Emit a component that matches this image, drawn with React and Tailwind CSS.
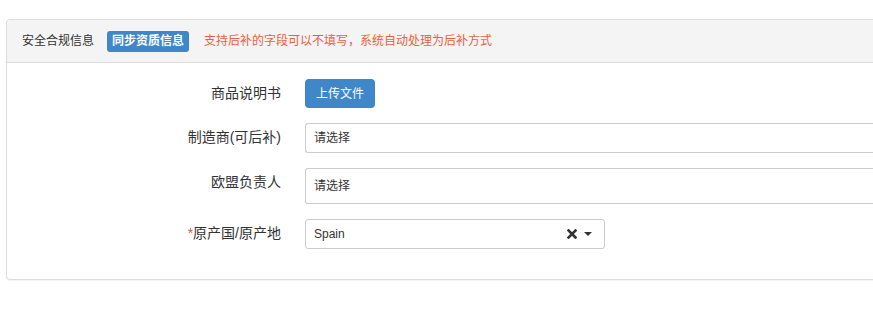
const FONT = '"Liberation Sans", Arial, "Noto Sans CJK SC", sans-serif'

function Label({ children, required }) {
  return (
    <div className="w-[274px] shrink-0 pt-[4px] text-right text-[14px] leading-[20px] text-[#333]">
      {required && <span className="text-[#c8603f]">*</span>}
      {children}
    </div>
  )
}

function TextSelect({ text, tall }) {
  return (
    <div
      className={`flex-1 flex items-center rounded-l-[3px] border border-r-0 border-[#ccc] bg-white pl-[8px] text-[12px] text-[#333] ${
        tall ? 'h-[36px]' : 'h-[30px]'
      }`}
    >
      {text}
    </div>
  )
}

export default function App() {
  return (
    <div className="w-[873px] h-[326px] overflow-hidden bg-white" style={{ fontFamily: FONT }}>
      <div className="ml-[6px] mt-[19px] w-[900px] rounded-[4px] border border-[#ddd] bg-white shadow-[0_1px_1px_rgba(0,0,0,0.05)]">
        <div className="flex h-[43px] items-center border-b border-[#ddd] bg-[#f4f4f4] pl-[15px] text-[12px] rounded-t-[4px]">
          <span className="text-[#333]">安全合规信息</span>
          <span className="ml-[13px] rounded-[3px] bg-[#3f87c9] px-[5px] py-[3px] font-bold leading-[15px] text-white">
            同步资质信息
          </span>
          <span className="ml-[15px] text-[#e8603f]">支持后补的字段可以不填写，系统自动处理为后补方式</span>
        </div>

        <div className="flex flex-col gap-[15px] pt-[16px] pb-[30px]">
          <div className="flex items-start gap-[24px]">
            <Label>商品说明书</Label>
            <button className="h-[29px] w-[70px] rounded-[4px] bg-[#3f87c9] text-[12px] text-white">
              上传文件
            </button>
          </div>

          <div className="flex items-start gap-[24px]">
            <Label>制造商(可后补)</Label>
            <TextSelect text="请选择" />
          </div>

          <div className="flex items-start gap-[24px]">
            <Label>欧盟负责人</Label>
            <TextSelect text="请选择" tall />
          </div>

          <div className="flex items-start gap-[24px]">
            <Label required>原产国/原产地</Label>
            <div className="flex h-[30px] w-[300px] items-center rounded-[3px] border border-[#ccc] bg-white pl-[8px] pr-[12px] text-[12px] text-[#333]">
              <span className="flex-1">Spain</span>
              <svg width="10" height="10" viewBox="0 0 10 10" className="mr-[7px]">
                <path d="M1.5 1.5 L8.5 8.5 M8.5 1.5 L1.5 8.5" stroke="#333" strokeWidth="2.6" strokeLinecap="square" />
              </svg>
              <svg width="8" height="4" viewBox="0 0 8 4">
                <path d="M0 0 L8 0 L4 4 Z" fill="#333" />
              </svg>
            </div>
          </div>
        </div>
      </div>
    </div>
  )
}
